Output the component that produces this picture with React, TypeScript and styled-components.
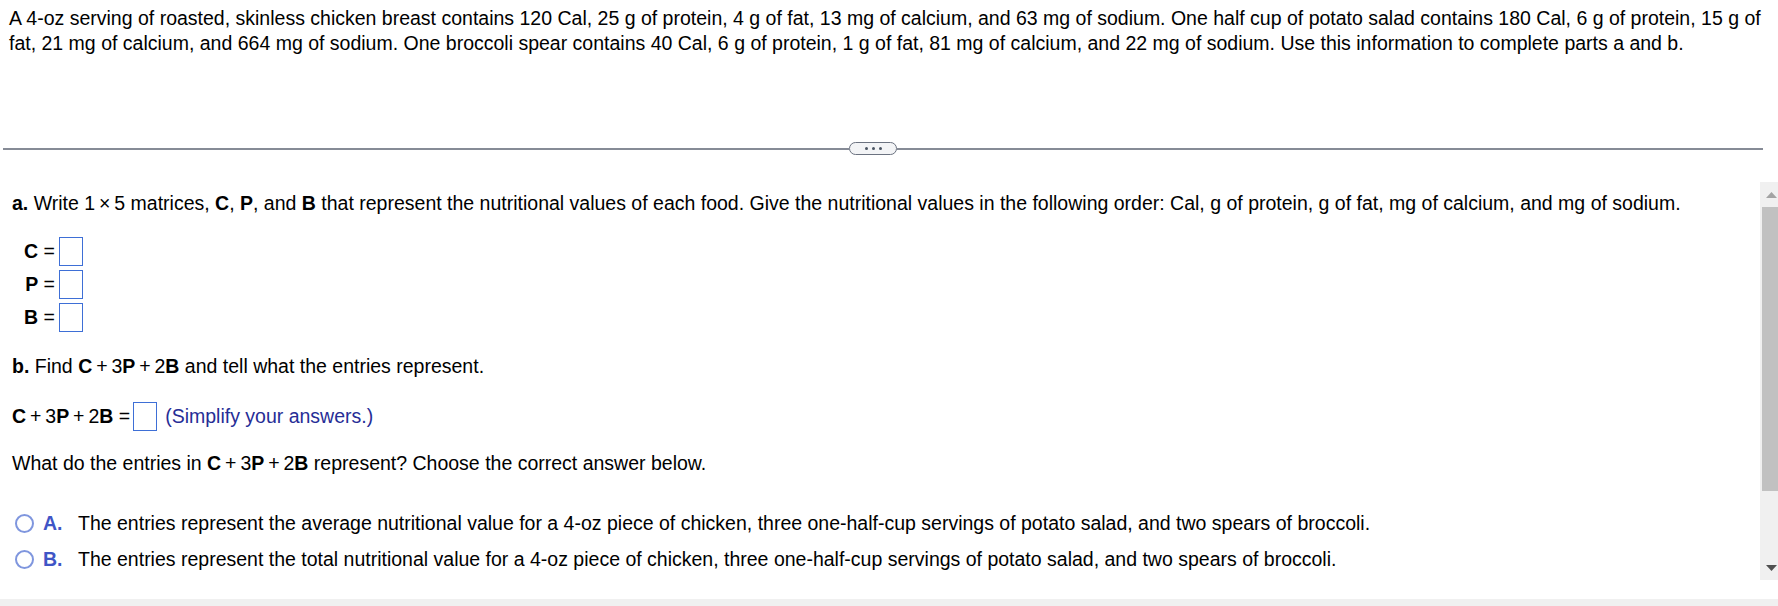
import { Fragment } from "react";
import styled, { createGlobalStyle } from "styled-components";

const GlobalStyle = createGlobalStyle`
  html, body {
    margin: 0;
    padding: 0;
    background: #ffffff;
  }
  body {
    font-family: "Liberation Sans", Arial, sans-serif;
    font-size: 19.5px;
    color: #000000;
  }
`;

const Page = styled.div`
  display: flex;
  flex-direction: column;
  width: 1778px;
  height: 606px;
  overflow: hidden;
`;

const Stem = styled.p`
  margin: 0;
  padding: 6px 4px 0 9px;
  line-height: 25px;
`;

const DividerRow = styled.div`
  display: flex;
  align-items: center;
  margin: 86px 0 0 3px;
  width: 1760px;
  height: 13px;
`;

const DividerLine = styled.div<{ $width?: number }>`
  height: 2px;
  background: #868b96;
  ${(p) => (p.$width ? `width: ${p.$width}px;` : "flex: 1;")}
`;

const MorePill = styled.div`
  display: flex;
  align-items: center;
  justify-content: center;
  gap: 4px;
  width: 46px;
  height: 11px;
  border: 1px solid #6b7280;
  border-radius: 7px;
  background: #f3f4f6;
`;

const Dot = styled.span`
  width: 3px;
  height: 3px;
  border-radius: 50%;
  background: #4b5563;
`;

const Pane = styled.div`
  display: flex;
  height: 398px;
  margin-top: 27px;
`;

const PaneBody = styled.div`
  flex: 1;
  overflow: hidden;
  padding: 9px 0 0 12px;
`;

const ScrollBar = styled.div`
  display: flex;
  flex-direction: column;
  width: 18px;
  background: #f0f0f0;
`;

const ArrowButton = styled.div`
  display: flex;
  align-items: center;
  justify-content: flex-end;
  padding-right: 1px;
  height: 25px;
`;

const Track = styled.div`
  flex: 1;
`;

const Thumb = styled.div`
  margin-left: 2px;
  height: 284px;
  background: #c1c1c1;
`;

const Line = styled.p`
  margin: 0;
  line-height: 25px;
`;

const MatrixList = styled.div`
  display: grid;
  grid-template-columns: 43px 24px;
  row-gap: 4px;
  column-gap: 4px;
  margin-top: 21px;
`;

const Label = styled.span`
  justify-self: end;
  align-self: center;
  white-space: pre;
`;

const AnswerBox = styled.span`
  display: inline-block;
  box-sizing: border-box;
  width: 24px;
  height: 29px;
  border: 1px solid #3e6fd6;
  background: #ffffff;
`;

const PartB = styled(Line)`
  margin-top: 22px;
`;

const ExprRow = styled.div`
  display: flex;
  align-items: center;
  margin-top: 23px;
  height: 29px;
`;

const ExprLabel = styled.span`
  margin-right: 3px;
`;

const Hint = styled.span`
  margin-left: 8px;
  color: #262d96;
`;

const Question = styled(Line)`
  margin-top: 20px;
`;

const Options = styled.div`
  display: flex;
  flex-direction: column;
  margin-top: 29px;
  margin-left: 3px;
`;

const Option = styled.label`
  display: flex;
  align-items: center;
  height: 36px;
`;

const Radio = styled.span`
  box-sizing: border-box;
  width: 19px;
  height: 19px;
  border: 2px solid #7f96de;
  border-radius: 50%;
  background: #ffffff;
`;

const OptionLetter = styled.b`
  width: 35px;
  margin-left: 9px;
  color: #3f55c6;
`;

const Spacer = styled.div`
  flex: 1;
`;

const Footer = styled.div`
  height: 7px;
  background: #f0f0f0;
`;

const Arrow = ({ up, color }: { up?: boolean; color: string }) => (
  <svg width="11" height="6" viewBox="0 0 11 6">
    <path d={up ? "M0 6 L5.5 0 L11 6 Z" : "M0 0 L11 0 L5.5 6 Z"} fill={color} />
  </svg>
);

const thin = "\u2009";

const Expr = () => (
  <>
    <b>C</b>
    {thin}+{thin}3<b>P</b>
    {thin}+{thin}2<b>B</b>
  </>
);

const matrices = ["C", "P", "B"];

const options = [
  {
    letter: "A.",
    text: "The entries represent the average nutritional value for a 4-oz piece of chicken, three one-half-cup servings of potato salad, and two spears of broccoli.",
  },
  {
    letter: "B.",
    text: "The entries represent the total nutritional value for a 4-oz piece of chicken, three one-half-cup servings of potato salad, and two spears of broccoli.",
  },
];

const App = () => {
  return (
    <Page>
      <GlobalStyle />
      <Stem>
        A 4-oz serving of roasted, skinless chicken breast contains 120 Cal, 25 g of protein, 4 g of fat, 13 mg of
        calcium, and 63 mg of sodium. One half cup of potato salad contains 180 Cal, 6 g of protein, 15 g of fat, 21 mg
        of calcium, and 664 mg of sodium. One broccoli spear contains 40 Cal, 6 g of protein, 1 g of fat, 81 mg of
        calcium, and 22 mg of sodium. Use this information to complete parts a and b.
      </Stem>

      <DividerRow>
        <DividerLine $width={846} />
        <MorePill>
          <Dot />
          <Dot />
          <Dot />
        </MorePill>
        <DividerLine />
      </DividerRow>

      <Pane>
        <PaneBody>
          <Line>
            <b>a.</b> Write 1{thin}×{thin}5 matrices, <b>C</b>, <b>P</b>, and <b>B</b> that represent the nutritional
            values of each food. Give the nutritional values in the following order: Cal, g of protein, g of fat, mg of
            calcium, and mg of sodium.
          </Line>

          <MatrixList>
            {matrices.map((m) => (
              <Fragment key={m}>
                <Label>
                  <b>{m}</b> =
                </Label>
                <AnswerBox />
              </Fragment>
            ))}
          </MatrixList>

          <PartB>
            <b>b.</b> Find <Expr /> and tell what the entries represent.
          </PartB>

          <ExprRow>
            <ExprLabel>
              <Expr /> =
            </ExprLabel>
            <AnswerBox />
            <Hint>(Simplify your answers.)</Hint>
          </ExprRow>

          <Question>
            What do the entries in <Expr /> represent? Choose the correct answer below.
          </Question>

          <Options>
            {options.map((o) => (
              <Option key={o.letter}>
                <Radio />
                <OptionLetter>{o.letter}</OptionLetter>
                <span>{o.text}</span>
              </Option>
            ))}
          </Options>
        </PaneBody>
        <ScrollBar>
          <ArrowButton>
            <Arrow up color="#a3a3a3" />
          </ArrowButton>
          <Track>
            <Thumb />
          </Track>
          <ArrowButton>
            <Arrow color="#505050" />
          </ArrowButton>
        </ScrollBar>
      </Pane>

      <Spacer />
      <Footer />
    </Page>
  );
};

export default App;
